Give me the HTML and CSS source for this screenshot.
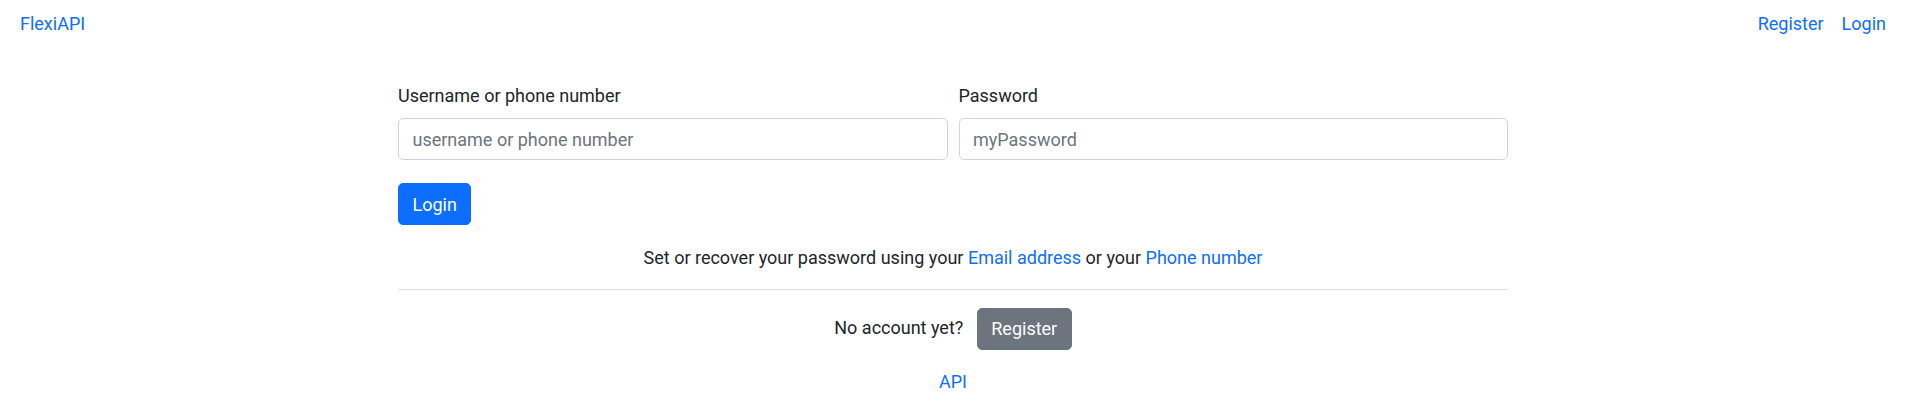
FILE: index.html
```html
<!DOCTYPE html>
<html lang="en">
<head>
<meta charset="utf-8">
<title>FlexiAPI</title>
<link rel="stylesheet" href="styles.css">
</head>
<body>
<nav class="topnav">
  <a class="nav-link" href="#">FlexiAPI</a>
  <div class="nav-right">
    <a class="nav-link" href="#">Register</a>
    <a class="nav-link" href="#">Login</a>
  </div>
</nav>
<main class="container">
  <form class="login-form">
    <div class="fields">
      <div class="field">
        <label class="form-label" for="username">Username or phone number</label>
        <input class="form-control" id="username" type="text" placeholder="username or phone number">
      </div>
      <div class="field">
        <label class="form-label" for="password">Password</label>
        <input class="form-control" id="password" type="password" placeholder="myPassword">
      </div>
    </div>
    <button class="btn btn-primary" type="button">Login</button>
  </form>
  <p class="recover">Set or recover your password using your <a href="#">Email address</a> or your <a href="#">Phone number</a></p>
  <hr class="divider">
  <p class="no-account">No account yet? <a class="btn btn-secondary" href="#">Register</a></p>
  <p class="api-link"><a href="#">API</a></p>
</main>
</body>
</html>
```

FILE: styles.css
```css
html {
  font-size: 18px;
}
body {
  margin: 0;
  font-family: Roboto, "Liberation Sans", sans-serif;
  font-size: 1rem;
  line-height: 1.5;
  color: #212529;
  background: #fff;
}
a {
  color: #0d6efd;
  text-decoration: none;
}
.topnav {
  display: flex;
  justify-content: space-between;
  align-items: center;
  padding: 10px 24px 0 20px;
}
.nav-right {
  display: flex;
  gap: 18px;
}
.container {
  width: 1110px;
  margin-left: calc(50% - 557px);
  padding-top: 45px;
}
.fields {
  display: flex;
  gap: 11px;
}
.field {
  flex: 1 1 0;
}
.form-label {
  display: block;
  margin-bottom: 9px;
}
.form-control {
  display: block;
  box-sizing: border-box;
  width: 100%;
  height: 42px;
  padding: 6px 13.5px;
  font-family: inherit;
  font-size: 1rem;
  line-height: 1.5;
  color: #212529;
  background: #fff;
  border: 1px solid #ced4da;
  border-radius: 5px;
}
.form-control::placeholder {
  color: #6c757d;
  opacity: 1;
}
.btn {
  display: inline-block;
  box-sizing: border-box;
  height: 42px;
  padding: 6px 13.5px;
  font-family: inherit;
  font-size: 1rem;
  line-height: 1.5;
  color: #fff;
  border: 1px solid transparent;
  border-radius: 5px;
  vertical-align: middle;
}
.btn-primary {
  margin-top: 23px;
  background: #0d6efd;
  border-color: #0d6efd;
}
.btn-secondary {
  margin-left: 9px;
  background: #6c757d;
  border-color: #6c757d;
}
.recover {
  margin: 19px 0 0;
  text-align: center;
}
.divider {
  margin: 18px 0 0;
  border: 0;
  border-top: 1px solid #dedede;
}
.no-account {
  margin: 18px 0 0;
  text-align: center;
}
.api-link {
  margin: 18px 0 0;
  text-align: center;
}
```
